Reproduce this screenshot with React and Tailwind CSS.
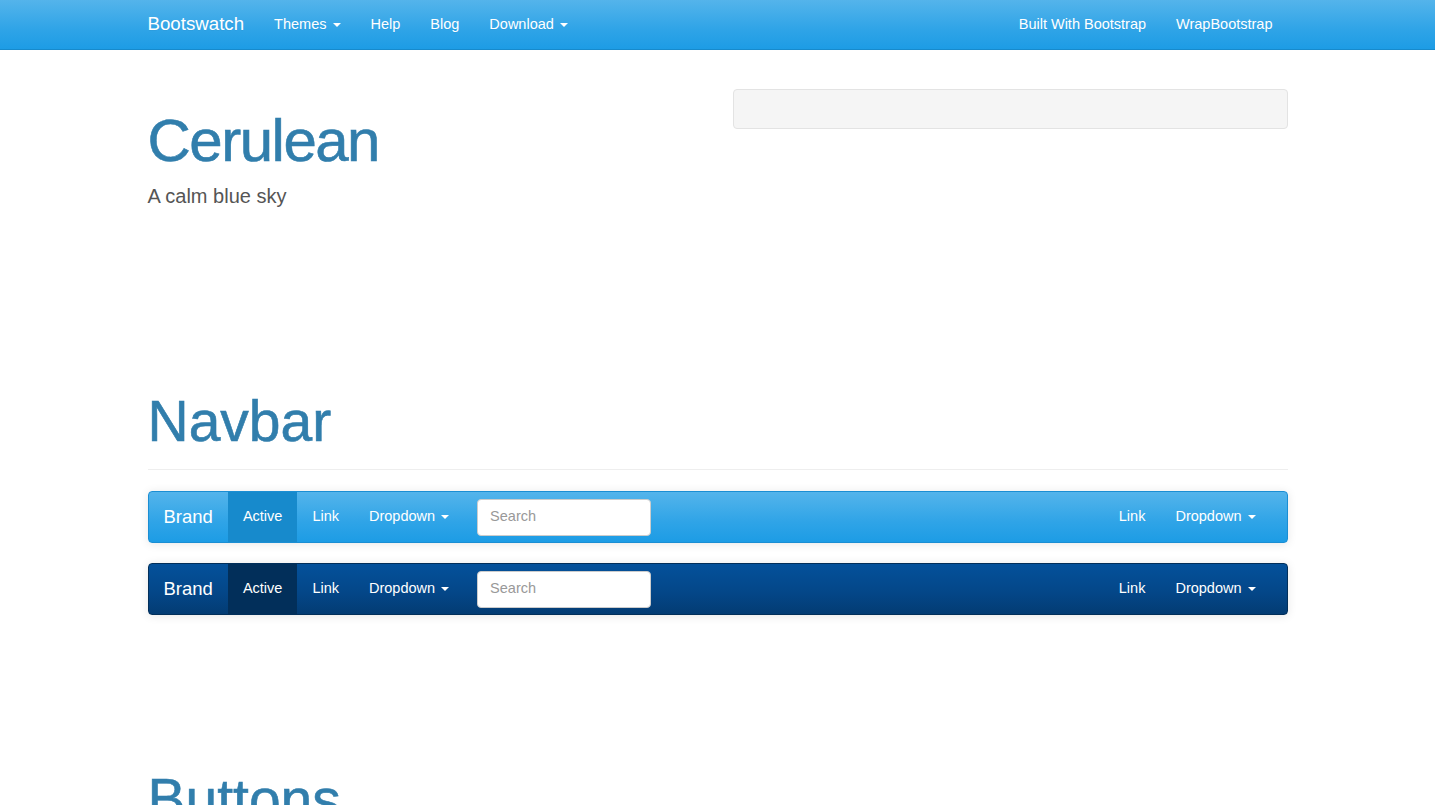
const Caret = () => (
    <span className="ml-1.5 inline-block h-0 w-0 border-x-4 border-t-4 border-x-transparent border-t-white align-middle" />
);

const DemoNavbar = ({ inverse }) => {
    const bar = inverse
        ? 'border-[#022f5a] bg-[linear-gradient(#04519b,#044687_60%,#033c73)]'
        : 'border-[#1b8ed3] bg-[linear-gradient(#54b4eb,#2fa4e7_60%,#1d9ce5)]';
    const active = inverse ? 'bg-[#022f5a]' : 'bg-[#178acc]';

    return (
        <div className={`flex h-[52px] items-stretch justify-between rounded border text-white shadow-[0_1px_10px_rgba(0,0,0,0.1)] ${bar}`}>
            <div className="flex items-stretch">
                <a className="flex items-center px-[15px] text-[18.5px]">Brand</a>
                <a className={`flex items-center px-[15px] text-[14.5px] ${active}`}>Active</a>
                <a className="flex items-center px-[15px] text-[14.5px]">Link</a>
                <a className="flex items-center px-[15px] text-[14.5px]">
                    Dropdown
                    <Caret />
                </a>
                <div className="flex items-center pl-[13px]">
                    <div className="flex h-[37px] w-[174px] items-center rounded border border-[#cccccc] bg-white px-3 text-[14.5px] text-[#999999]">
                        Search
                    </div>
                </div>
            </div>
            <div className="flex items-stretch pr-[16px]">
                <a className="flex items-center px-[15px] text-[14.5px]">Link</a>
                <a className="flex items-center px-[15px] text-[14.5px]">
                    Dropdown
                    <Caret />
                </a>
            </div>
        </div>
    );
};

const App = () => {
    return (
        <div className="min-h-screen bg-white font-['Liberation_Sans',Arial,sans-serif] text-[#555555]">
            <div className="h-[50px] border-b border-[#178acc] bg-[linear-gradient(#54b4eb,#2fa4e7_60%,#1d9ce5)] text-white [text-shadow:0_1px_0_rgba(0,0,0,0.05)]">
                <div className="mx-auto flex h-full w-[1140px] items-stretch justify-between">
                    <div className="flex items-stretch">
                        <a className="flex items-center pr-[15px] text-[18.7px]">Bootswatch</a>
                        <a className="flex items-center px-[15px] text-[14.5px]">
                            Themes
                            <Caret />
                        </a>
                        <a className="flex items-center px-[15px] text-[14.5px]">Help</a>
                        <a className="flex items-center px-[15px] text-[14.5px]">Blog</a>
                        <a className="flex items-center px-[15px] text-[14.5px]">
                            Download
                            <Caret />
                        </a>
                    </div>
                    <div className="flex items-stretch">
                        <a className="flex items-center px-[15px] text-[14.5px]">Built With Bootstrap</a>
                        <a className="flex items-center px-[15px] text-[14.5px]">WrapBootstrap</a>
                    </div>
                </div>
            </div>

            <div className="mx-auto w-[1140px] pt-[39px]">
                <div className="flex items-start">
                    <div className="w-[585px] pt-[19px]">
                        <h1 className="text-[60px] leading-[66px] tracking-tight text-[#317eac] [-webkit-text-stroke:0.6px_#317eac]">Cerulean</h1>
                        <p className="mt-[8px] text-[20px] leading-[28px] text-[#555555]">A calm blue sky</p>
                    </div>
                    <div className="h-[40px] flex-1 rounded border border-[#e3e3e3] bg-[#f5f5f5]" />
                </div>

                <div className="mt-[178px] border-b border-[#eeeeee] pb-[15px]">
                    <h1 className="text-[57px] leading-[66px] text-[#317eac] [-webkit-text-stroke:0.6px_#317eac]">Navbar</h1>
                </div>

                <div className="mt-[21px] flex flex-col gap-5">
                    <DemoNavbar />
                    <DemoNavbar inverse />
                </div>

                <div className="mt-[151px]">
                    <h1 className="text-[57px] leading-[66px] text-[#317eac] [-webkit-text-stroke:0.6px_#317eac]">Buttons</h1>
                </div>
            </div>
        </div>
    );
};

export default App;
